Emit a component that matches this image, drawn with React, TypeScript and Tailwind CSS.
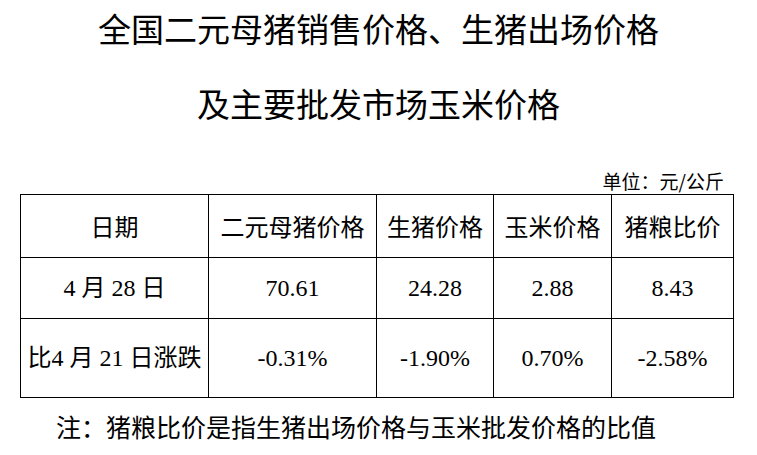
const sans = "font-['Noto_Sans_CJK_SC','Noto_Sans',sans-serif]";
const serif = "font-['Liberation_Serif','Noto_Sans_CJK_SC',serif]";

const headers = ["日期", "二元母猪价格", "生猪价格", "玉米价格", "猪粮比价"];
const widths = ["w-[188px]", "w-[168px]", "w-[117px]", "w-[118px]", "w-[122px]"];

const rows = [
  { h: "h-[61px]", cells: ["4 月 28 日", "70.61", "24.28", "2.88", "8.43"] },
  { h: "h-[79px]", cells: ["比4 月 21 日涨跌", "-0.31%", "-1.90%", "0.70%", "-2.58%"] },
];

const App = () => {
  return (
    <div className={`w-[757px] h-[455px] bg-white text-black ${sans}`}>
      <div className="h-[56px] leading-[56px] text-center text-[33px]">
        全国二元母猪销售价格、生猪出场价格
      </div>
      <div className="mt-[20px] h-[55px] leading-[55px] text-center text-[33px]">
        及主要批发市场玉米价格
      </div>
      <div className="mt-[37px] h-[26px] leading-[26px] text-right text-[19px] pr-[33px]">
        单位：元/公斤
      </div>
      <table className="ml-[20px] table-fixed border-collapse">
        <colgroup>
          {widths.map((w, i) => (
            <col key={i} className={w} />
          ))}
        </colgroup>
        <thead>
          <tr className="h-[63px]">
            {headers.map((t) => (
              <th key={t} className="border border-black p-0 text-center text-[24px] font-normal">
                {t}
              </th>
            ))}
          </tr>
        </thead>
        <tbody>
          {rows.map((r) => (
            <tr key={r.cells[0]} className={r.h}>
              {r.cells.map((c, i) => (
                <td key={i} className={`border border-black p-0 text-center text-[24px] whitespace-nowrap ${serif}`}>
                  {c}
                </td>
              ))}
            </tr>
          ))}
        </tbody>
      </table>
      <div className="h-[56px] leading-[56px] pl-[56px] text-[25px]">
        注：猪粮比价是指生猪出场价格与玉米批发价格的比值
      </div>
    </div>
  );
};

export default App;
